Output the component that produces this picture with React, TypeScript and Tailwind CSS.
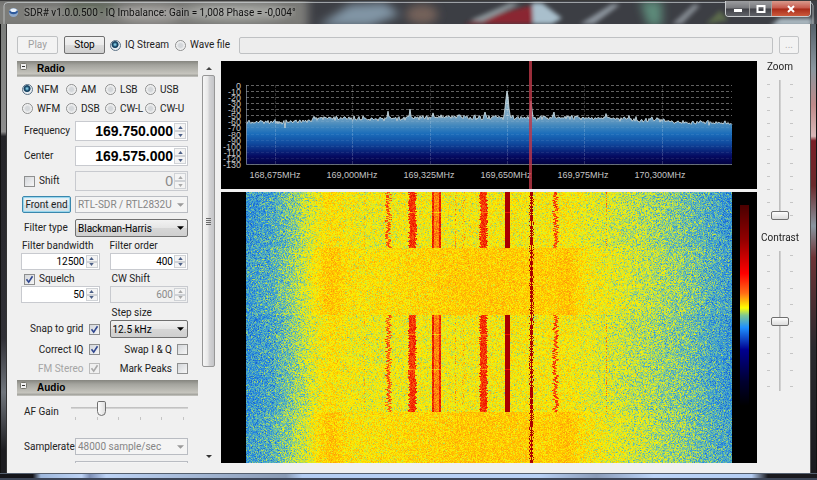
import { useEffect, useRef, useState } from 'react';
import type { ReactNode } from 'react';
import clsx from 'clsx';

const MODES = ['NFM', 'AM', 'LSB', 'USB', 'WFM', 'DSB', 'CW-L', 'CW-U'];

// waterfall palette, from weak to strong signal: [level, r, g, b]
const PALETTE = [
	[0, 0, 0, 145],
	[1, 34, 130, 225],
	[1.4, 95, 185, 180],
	[1.7, 190, 225, 75],
	[1.95, 250, 242, 5],
	[2.2, 255, 205, 0],
	[3, 254, 120, 16],
	[4, 240, 20, 0],
	[5, 170, 0, 0],
	[6, 80, 0, 0],
];

// noise floor across the band: [x, level]
const FLOOR = [
	[0, 1.16],
	[25, 1.28],
	[45, 1.54],
	[65, 1.84],
	[85, 2.02],
	[120, 1.95],
	[200, 1.98],
	[300, 2.02],
	[345, 1.9],
	[400, 1.68],
	[440, 1.5],
	[486, 1.15],
];

// bursts: [centre, half width, level, jitter]
const BURSTS = [
	[118, 0, 2.4, 0],
	[142, 1, 3.3, 2],
	[166, 3, 3.7, 1],
	[190, 4, 2.9, 0],
	[209, 0, 2.8, 0],
	[217, 0, 2.7, 1],
	[237, 3, 3.7, 1],
	[309, 1, 3.5, 2],
	[360, 0, 2.9, 0],
];

const WATERFALL_WIDTH = 486;
const WATERFALL_HEIGHT = 271;

function createRandom(seed: number) {
	let s = seed;
	return () => {
		s = (s * 1664525 + 1013904223) >>> 0;
		return s / 4294967296;
	};
}

function interpolate(points: number[][], x: number, column = 1) {
	if (x <= points[0][0]) return points[0][column];
	for (let i = 1; i < points.length; i++) {
		if (x <= points[i][0]) {
			const from = points[i - 1];
			const to = points[i];
			return from[column] + ((x - from[0]) / (to[0] - from[0])) * (to[column] - from[column]);
		}
	}
	return points[points.length - 1][column];
}

function Waterfall() {
	const ref = useRef<HTMLCanvasElement>(null);

	useEffect(() => {
		const ctx = ref.current?.getContext('2d');
		if (!ctx) return;
		const random = createRandom(41);
		const image = ctx.createImageData(WATERFALL_WIDTH, WATERFALL_HEIGHT);

		for (let y = 0; y < WATERFALL_HEIGHT; y++) {
			const active = y < 56 || (y >= 123 && y < 220);
			const fade = y === 20 || y === 142 || y === 177;
			const row = Array.from({ length: WATERFALL_WIDTH }, (_, x) => {
				let level = interpolate(FLOOR, x);
				const center = Math.exp(-(((x - 235) / 95) ** 2));
				level += active ? -0.03 : 0.03 + 0.22 * center;
				level += (active ? 0.1 : 0.22) * Math.exp(-(((x - 83) / 14) ** 2));
				level += (active ? 0.06 : 0.22) * Math.exp(-(((x - 321) / 12) ** 2));
				const noise = (random() + random() + random() - 1.5) * 0.5;
				return level + noise * 0.8;
			});
			if (active) {
				BURSTS.forEach(([x, half, level, jitter]) => {
					const shift = Math.round((random() - 0.5) * 2 * jitter);
					for (let d = -half; d <= half; d++) {
						if (half === 0 && random() < 0.55) continue;
						const edge = half === 4 && Math.abs(d) > 2 ? 1 : 0;
						row[x + d + shift] = level + edge + (random() - 0.5) * 0.9 - (fade ? 0.9 : 0);
					}
				});
				for (let x = 259; x <= 263; x++) row[x] = fade ? 4 : 5;
			}
			const wobble = Math.round((random() - 0.5) * 1.6);
			for (let x = 284; x <= 286; x++) row[x + (x === 285 ? 0 : wobble)] = 4.7 + random() * 0.5;

			row.forEach((value, x) => {
				const [r, g, b] = [1, 2, 3].map((column) => interpolate(PALETTE, value, column));
				image.data.set([r, g, b, 255], (y * WATERFALL_WIDTH + x) * 4);
			});
		}
		ctx.putImageData(image, 0, 0);
	}, []);

	return (
		<canvas
			ref={ref}
			width={WATERFALL_WIDTH}
			height={WATERFALL_HEIGHT}
			className="h-full min-w-0 flex-1"
		/>
	);
}

function buildTrace() {
	const random = createRandom(7);
	const floor = [
		[0, 61],
		[45, 61],
		[78, 57],
		[130, 58],
		[200, 56],
		[300, 57],
		[350, 57],
		[410, 59],
		[440, 62],
		[486, 62],
	];
	const peaks = [
		[118, 3, 1],
		[142, 6, 1],
		[164, 7, 1],
		[187, 4, 1],
		[239, 5, 1],
		[261, 26, 2],
		[285, 18, 1],
		[308, 6, 1],
		[360, 3, 1],
		[383, 3, 1],
		[406, 4, 1],
	];
	const points: string[] = [];
	for (let x = 0; x <= 486; x++) {
		let y = interpolate(floor, x) + (random() + random() - 1) * 3;
		peaks.forEach(([px, height, w]) => {
			y -= height * Math.exp(-(((x - px) / w) ** 2));
		});
		if (x === 39) y += 4;
		points.push(`${x + 25},${y.toFixed(1)}`);
	}
	return points.join(' ');
}

const TRACE = buildTrace();

function Spectrum() {
	const frequencies = ['168,675', '169,000', '169,325', '169,650', '169,975', '170,300'];

	return (
		<svg viewBox="0 0 536 128" className="block w-full shrink-0 bg-black font-['Liberation_Sans',sans-serif]">
			<defs>
				<linearGradient id="fill" gradientUnits="userSpaceOnUse" x1="0" y1="24" x2="0" y2="103">
					<stop offset="0" stopColor="#b9cccf" />
					<stop offset="0.42" stopColor="#6f9fc0" />
					<stop offset="0.52" stopColor="#3f86bd" />
					<stop offset="0.62" stopColor="#1a6cba" />
					<stop offset="0.75" stopColor="#0f469b" />
					<stop offset="0.9" stopColor="#050b62" />
					<stop offset="1" stopColor="#020140" />
				</linearGradient>
			</defs>
			<polygon points={`25,103 ${TRACE} 511,103`} fill="url(#fill)" />
			{Array.from({ length: 14 }, (_, i) => (
				<g key={i}>
					<line
						x1="25"
						x2="511"
						y1={24.5 + Math.round(i * 6.07)}
						y2={24.5 + Math.round(i * 6.07)}
						stroke="#fff"
						strokeOpacity={i < 6 ? 0.38 : 0.08}
						strokeDasharray="3 2"
					/>
					<text x="20" y={28 + Math.round(i * 6.07)} fontSize="9" textAnchor="end" fill="#c4c4c4">
						{i === 0 ? '0' : -i * 10}
					</text>
				</g>
			))}
			{frequencies.map((frequency, i) => (
				<g key={frequency}>
					<line
						x1={54.5 + Math.round(i * 77.3)}
						x2={54.5 + Math.round(i * 77.3)}
						y1="24"
						y2="103"
						stroke="#fff"
						strokeOpacity="0.18"
						strokeDasharray="3 1"
					/>
					<text x={54 + i * 77} y="117" fontSize="9" textAnchor="middle" fill="#c4c4c4">
						{frequency}MHz
					</text>
				</g>
			))}
			<polyline points={TRACE} fill="none" stroke="#c5d6dc" strokeWidth="0.9" />
			<path d="M25.500 24V103.500H511" fill="none" stroke="#8d98a8" strokeOpacity="0.7" />
			<rect x="308" y="0" width="3" height="128" fill="#c03848" fillOpacity="0.8" />
		</svg>
	);
}

function RadioButton({
	name,
	label,
	checked,
	onChange,
}: {
	name: string;
	label: string;
	checked: boolean;
	onChange: () => void;
}) {
	return (
		<label className="flex items-center gap-1 whitespace-nowrap">
			<input
				type="radio"
				name={name}
				checked={checked}
				onChange={onChange}
				className="h-[11px] w-[11px] shrink-0 appearance-none rounded-full border border-[#8e8f8f] bg-[radial-gradient(circle,#d4d7da_30%,#f8f8f8_70%)] checked:border-[#5c7286] checked:bg-[radial-gradient(circle_at_45%_40%,#7cc4e0_8%,#14405f_32%,#1d4a6b_42%,#e8eef2_54%)]"
			/>
			{label}
		</label>
	);
}

function CheckBox({
	label,
	defaultChecked,
	disabled,
	reverse,
}: {
	label: string;
	defaultChecked?: boolean;
	disabled?: boolean;
	reverse?: boolean;
}) {
	return (
		<label
			className={clsx(
				'flex items-center whitespace-nowrap',
				reverse ? 'flex-row-reverse justify-start gap-[5px]' : 'gap-1',
				disabled && 'text-[#a5a5a5]',
			)}
		>
			<span className="grid shrink-0">
				<input
					type="checkbox"
					defaultChecked={defaultChecked}
					disabled={disabled}
					className="peer h-[11px] w-[11px] appearance-none border border-[#8e8f8f] bg-[linear-gradient(135deg,#d3d6da,#f6f6f6)] [grid-area:1/1] disabled:border-[#bcbcbc] disabled:bg-none"
				/>
				<svg
					viewBox="0 0 11 11"
					className="pointer-events-none invisible h-[11px] w-[11px] text-[#31478f] [grid-area:1/1] peer-checked:visible peer-disabled:text-[#a8a8a8]"
				>
					<path d="M2.500 5.200L4.700 8.200L8.500 2.200" fill="none" stroke="currentColor" strokeWidth="1.600" />
				</svg>
			</span>
			{label}
		</label>
	);
}

function SpinBox({
	id,
	value,
	large,
	disabled,
}: {
	id: string;
	value: string;
	large?: boolean;
	disabled?: boolean;
}) {
	return (
		<div
			className={clsx(
				'flex w-full min-w-0 border border-[#c8cacf] pr-px',
				large ? 'h-5' : 'h-[17px]',
				disabled ? 'bg-[#f0f0f0]' : 'bg-white',
			)}
		>
			<input
				id={id}
				type="text"
				defaultValue={value}
				disabled={disabled}
				className={clsx(
					'w-0 min-w-0 flex-1 bg-transparent pr-px text-right outline-none',
					large && "font-['Liberation_Sans',sans-serif] text-[14px]",
					large && !disabled && 'font-bold',
					disabled ? 'text-[#8a8a8a]' : 'text-black',
				)}
			/>
			<div className={clsx('my-px flex w-[12px] shrink-0 flex-col', disabled ? 'text-[#a9a9a9]' : 'text-[#4b5f87]')}>
				{['Up', 'Down'].map((direction) => (
					<button
						key={direction}
						type="button"
						disabled={disabled}
						aria-label={direction}
						className="flex min-h-0 flex-1 items-center justify-center border border-[#cfd2d6] bg-[#f4f4f4]"
					>
						<svg viewBox="0 0 6 4" className="h-[3px] w-[5px]">
							<path d={direction === 'Up' ? 'M3 0L6 4H0Z' : 'M0 0H6L3 4Z'} fill="currentColor" />
						</svg>
					</button>
				))}
			</div>
		</div>
	);
}

function DropDown({
	id,
	value,
	flat,
	disabled,
}: {
	id: string;
	value: string;
	flat?: boolean;
	disabled?: boolean;
}) {
	return (
		<div className="grid w-full min-w-0 items-center">
			<select
				id={id}
				defaultValue={value}
				disabled={disabled}
				className={clsx(
					'w-full min-w-0 appearance-none border pl-[2px] pr-3 leading-[15px] [grid-area:1/1]',
					flat
						? 'h-[17px] border-[#b9bcc2] bg-[#f4f4f4] text-[#858585]'
						: 'h-[18px] rounded-[2px] border-[#707070] bg-[linear-gradient(#f2f2f2,#e6e6e6_48%,#d6d6d6_52%,#cfcfcf)] text-black',
				)}
			>
				<option>{value}</option>
			</select>
			<svg
				viewBox="0 0 8 4"
				className={clsx(
					'pointer-events-none mr-1 h-[4px] w-[7px] justify-self-end [grid-area:1/1]',
					flat ? 'text-[#9a9a9a]' : 'text-black',
				)}
			>
				<path d="M0 0H8L4 4Z" fill="currentColor" />
			</svg>
		</div>
	);
}

function GroupHeader({ title }: { title: string }) {
	return (
		<button
			type="button"
			className="flex h-4 w-full shrink-0 items-center gap-[10px] bg-[linear-gradient(#85857f,#a3a39d_25%,#c6c5be_80%,#a4a49e_90%,#c8c8c4)] pl-[3px] font-['Liberation_Sans',sans-serif] font-bold text-black"
		>
			<svg viewBox="0 0 7 7" className="mb-[5px] h-[7px] w-[7px]">
				<rect x="0.5" y="0.5" width="6" height="6" rx="1" fill="#f1f1f1" stroke="#77776f" />
				<path d="M2 3.500H5" stroke="#333" />
			</svg>
			{title}
		</button>
	);
}

function Row({ label, htmlFor, children }: { label: string; htmlFor: string; children: ReactNode }) {
	return (
		<div className="flex items-center pl-[7px] pr-[10px]">
			<label htmlFor={htmlFor} className="w-[51px] shrink-0 whitespace-nowrap">
				{label}
			</label>
			{children}
		</div>
	);
}

function SidePanel() {
	const [mode, setMode] = useState('NFM');

	return (
		<div className="flex w-[181px] shrink-0 flex-col overflow-hidden">
			<GroupHeader title="Radio" />
			<div className="mt-[3px] grid auto-rows-[19px] grid-cols-[44px_39px_40px_40px] pl-[5px]">
				{MODES.map((m) => (
					<RadioButton key={m} name="mode" label={m} checked={mode === m} onChange={() => setMode(m)} />
				))}
			</div>
			<div className="mt-[3px] flex flex-col gap-[5px]">
				<Row label="Frequency" htmlFor="frequency">
					<SpinBox id="frequency" value="169.750.000" large />
				</Row>
				<Row label="Center" htmlFor="center">
					<SpinBox id="center" value="169.575.000" large />
				</Row>
				<div className="flex items-center pl-[7px] pr-[10px]">
					<div className="w-[51px] shrink-0">
						<CheckBox label="Shift" />
					</div>
					<SpinBox id="shift" value="0" large disabled />
				</div>
				<div className="flex items-center gap-1 pl-[5px] pr-[10px]">
					<button
						type="button"
						className="h-[17px] w-[49px] shrink-0 whitespace-nowrap rounded-[2px] border border-[#3a87ad] bg-[linear-gradient(#f0f4f6,#e6ecef_50%,#d3dde2_52%,#dce4e8)] leading-[14px] shadow-[inset_0_0_1px_1px_#8fd4ee]"
					>
						Front end
					</button>
					<DropDown id="device" value="RTL-SDR / RTL2832U" flat disabled />
				</div>
			</div>
			<div className="mt-[6px]">
				<Row label="Filter type" htmlFor="filter-type">
					<DropDown id="filter-type" value="Blackman-Harris" />
				</Row>
			</div>
			<div className="mt-[2px] grid grid-cols-2 gap-x-[10px] pl-1 pr-[10px] leading-[14px]">
				<label htmlFor="bandwidth" className="whitespace-nowrap pl-px">
					Filter bandwidth
				</label>
				<label htmlFor="order">Filter order</label>
				<SpinBox id="bandwidth" value="12500" />
				<SpinBox id="order" value="400" />
			</div>
			<div className="mt-[2px] grid grid-cols-2 gap-x-[10px] pl-1 pr-[10px] leading-[14px]">
				<div className="pl-[3px]">
					<CheckBox label="Squelch" defaultChecked />
				</div>
				<label htmlFor="cw-shift" className="pl-[2px]">
					CW Shift
				</label>
				<SpinBox id="squelch" value="50" />
				<SpinBox id="cw-shift" value="600" disabled />
			</div>
			<div className="mt-[3px] grid grid-cols-2 gap-x-[10px] pl-1 pr-[10px]">
				<label htmlFor="step" className="col-start-2 pl-[2px] leading-[14px]">
					Step size
				</label>
				<CheckBox label="Snap to grid" defaultChecked reverse />
				<DropDown id="step" value="12.5 kHz" />
			</div>
			<div className="mt-[2px] grid auto-rows-[19px] grid-cols-2 gap-x-[10px] pl-1 pr-[10px]">
				<CheckBox label="Correct IQ" defaultChecked reverse />
				<CheckBox label="Swap I & Q" reverse />
				<CheckBox label="FM Stereo" defaultChecked disabled reverse />
				<CheckBox label="Mark Peaks" reverse />
			</div>
			<div className="mt-[2px]">
				<GroupHeader title="Audio" />
			</div>
			<div className="mt-1 flex items-center gap-1 pl-[7px] pr-[10px]">
				<label htmlFor="gain" className="w-[43px] shrink-0 whitespace-nowrap">
					AF Gain
				</label>
				<div className="flex min-w-0 flex-1 flex-col gap-px pb-1">
					<input
						id="gain"
						type="range"
						defaultValue="24"
						className="h-[16px] w-full appearance-none bg-[linear-gradient(#b9b9b9,#dcdcdc)] bg-[length:100%_2px] bg-center bg-no-repeat [&::-webkit-slider-thumb]:h-[15px] [&::-webkit-slider-thumb]:w-[9px] [&::-webkit-slider-thumb]:appearance-none [&::-webkit-slider-thumb]:rounded-b-[5px] [&::-webkit-slider-thumb]:rounded-t-[2px] [&::-webkit-slider-thumb]:border [&::-webkit-slider-thumb]:border-[#6f6f6f] [&::-webkit-slider-thumb]:bg-[linear-gradient(90deg,#fdfdfd,#dedede)]"
					/>
					<div className="flex justify-between px-1">
						{[0, 1, 2, 3, 4, 5].map((tick) => (
							<span key={tick} className="h-[3px] w-px bg-[#c4c4c4]" />
						))}
					</div>
				</div>
			</div>
			<div className="mt-[14px] flex flex-col gap-[6px]">
				<Row label="Samplerate" htmlFor="samplerate">
					<DropDown id="samplerate" value="48000 sample/sec" flat disabled />
				</Row>
				<div className="ml-[58px] mr-[10px] h-[17px] border border-[#b9bcc2] bg-[#f4f4f4]" />
			</div>
		</div>
	);
}

function ScrollBar() {
	return (
		<div className="ml-1 flex w-[13px] shrink-0 flex-col items-center bg-[#f0f0f0]">
			<button type="button" aria-label="Scroll up" className="flex h-[14px] w-full items-center justify-center">
				<svg viewBox="0 0 6 3" className="h-[3px] w-[6px]">
					<path d="M3 0L6 3H0Z" fill="#444" />
				</svg>
			</button>
			<div className="flex w-full flex-1 flex-col">
				<div className="flex flex-[78] flex-col items-center justify-center gap-px rounded-[2px] border border-[#979797] bg-[linear-gradient(90deg,#f6f6f6,#e8e8e8_45%,#d4d4d6_55%,#c4c5c8)]">
					{[0, 1, 2, 3].map((line) => (
						<span key={line} className="h-px w-[5px] bg-[#6a6a6a]" />
					))}
				</div>
				<div className="flex-[22]" />
			</div>
			<button type="button" aria-label="Scroll down" className="flex h-[14px] w-full items-center justify-center">
				<svg viewBox="0 0 6 3" className="h-[3px] w-[6px]">
					<path d="M0 0H6L3 3Z" fill="#333" />
				</svg>
			</button>
		</div>
	);
}

function VerticalSlider({
	id,
	label,
	value,
	ticks,
}: {
	id: string;
	label: string;
	value: string;
	ticks: number;
}) {
	const marks = Array.from({ length: ticks }, (_, i) => (
		<span key={i} className="h-px w-[3px] bg-[#c6c6c6]" />
	));

	return (
		<div className="flex flex-col items-center">
			<label htmlFor={id} className="h-[19px] leading-[11px]">
				{label}
			</label>
			<div className="flex gap-px">
				<div className="flex flex-col justify-between py-1">{marks}</div>
				<input
					id={id}
					type="range"
					defaultValue={value}
					className="h-[140px] w-[18px] appearance-none bg-[linear-gradient(90deg,#b5b5b5,#dadada)] bg-[length:2px_100%] bg-center bg-no-repeat [direction:rtl] [writing-mode:vertical-lr] [&::-webkit-slider-thumb]:h-[9px] [&::-webkit-slider-thumb]:w-[18px] [&::-webkit-slider-thumb]:appearance-none [&::-webkit-slider-thumb]:rounded-[2px] [&::-webkit-slider-thumb]:border [&::-webkit-slider-thumb]:border-[#6f6f6f] [&::-webkit-slider-thumb]:bg-[linear-gradient(#fdfdfd,#dcdcdc)]"
				/>
				<div className="flex flex-col justify-between py-1">{marks}</div>
			</div>
		</div>
	);
}

function TitleBar() {
	return (
		<header className="grid h-6 shrink-0 overflow-hidden border-t border-[#3a3a3a]">
			<svg viewBox="0 0 817 24" preserveAspectRatio="none" className="h-full w-full [grid-area:1/1]">
				<defs>
					<filter id="soft" x="-10%" y="-50%" width="120%" height="200%">
						<feGaussianBlur stdDeviation="5" />
					</filter>
					<filter id="softer" x="-10%" y="-50%" width="120%" height="200%">
						<feGaussianBlur stdDeviation="2" />
					</filter>
				</defs>
				<rect width="817" height="24" fill="#3c3e44" />
				<g filter="url(#soft)">
					<rect x="-10" y="-4" width="318" height="34" fill="#7d7d79" />
					<ellipse cx="90" cy="8" rx="28" ry="8" fill="#626a5c" />
					<ellipse cx="150" cy="14" rx="30" ry="10" fill="#9a9794" />
					<ellipse cx="235" cy="12" rx="50" ry="9" fill="#9fa09c" />
					<path d="M318 26L350 4L385 2L400 14L370 26Z" fill="#8195a5" />
					<ellipse cx="422" cy="14" rx="16" ry="10" fill="#75625a" />
					<path d="M640 0H662V26H648Z" fill="#5d8b7a" />
				</g>
				<g filter="url(#softer)">
					<path d="M464 24L510 10L535 4L532 24Z" fill="#8a2730" />
					<path d="M470 20L510 2L520 3L482 22Z" fill="#8b9499" />
					<path d="M532 2L542 2L562 18L552 24H533Z" fill="#a9bfcc" />
					<path d="M580 24L612 3L620 4L594 24Z" fill="#8c949d" />
					<path d="M672 24L694 3L700 5L682 24Z" fill="#82888f" />
					<path d="M706 24L720 10L728 20Z" fill="#5b6b4c" />
					<path d="M770 26L780 18H812V26Z" fill="#aebcc4" />
				</g>
				<path d="M4 24V5Q4 1.500 8 1.500H809Q813 1.500 813 5V24" fill="none" stroke="#d6dadd" strokeOpacity="0.7" />
			</svg>
			<div className="z-10 flex min-w-0 items-start [grid-area:1/1]">
				<div className="flex h-[23px] min-w-0 flex-1 items-center gap-[5px] pl-2">
					<svg viewBox="0 0 12 12" className="h-[11px] w-[11px] shrink-0">
						<circle cx="6" cy="6" r="5" fill="#8fa8c8" />
						<path d="M1 5Q6 1 11 5Q10 8 6 8Q2 8 1 5Z" fill="#2e5a9c" />
						<ellipse cx="6" cy="3.500" rx="3.500" ry="2" fill="#eaf2fa" />
					</svg>
					<h1 className="truncate text-[10px] text-[#111] [text-shadow:0_0_6px_#d0d0d0]">
						SDR# v1.0.0.500 - IQ Imbalance: Gain = 1,008 Phase = -0,004°
					</h1>
				</div>
				<div className="mr-[6px] flex h-4 shrink-0 overflow-hidden rounded-b-[4px] border border-t-0 border-[#c9ccce]">
					<button
						type="button"
						aria-label="Minimize"
						className="flex w-6 items-center justify-center border-r border-[#a0a0a0] bg-[linear-gradient(#9c9da0,#77787c_48%,#3f4046_52%,#606268)]"
					>
						<svg viewBox="0 0 10 8" className="h-2 w-[10px]">
							<rect x="1" y="4" width="8" height="3" fill="#fff" />
						</svg>
					</button>
					<button
						type="button"
						aria-label="Maximize"
						className="flex w-[22px] items-center justify-center border-r border-[#a0a0a0] bg-[linear-gradient(#9c9da0,#77787c_48%,#3f4046_52%,#606268)]"
					>
						<svg viewBox="0 0 10 8" className="h-2 w-[10px]">
							<rect x="1.5" y="1" width="7" height="6" fill="none" stroke="#fff" strokeWidth="2" />
						</svg>
					</button>
					<button
						type="button"
						aria-label="Close"
						className="flex w-[38px] items-center justify-center bg-[linear-gradient(#d99a8c,#c6584a_48%,#a82a18_52%,#cc5a3c)]"
					>
						<svg viewBox="0 0 10 8" className="h-2 w-[10px]">
							<path d="M2 1L8 7M8 1L2 7" stroke="#fff" strokeWidth="2" />
						</svg>
					</button>
				</div>
			</div>
		</header>
	);
}

function Toolbar() {
	const [source, setSource] = useState('IQ Stream');

	return (
		<div className="flex h-[18px] shrink-0 items-center">
			<button
				type="button"
				disabled
				className="h-[18px] w-[41px] rounded-[2px] border border-[#bfc1c3] bg-[#f3f3f3] text-[#a0a0a0]"
			>
				Play
			</button>
			<button
				type="button"
				className="ml-[6px] h-[18px] w-[41px] rounded-[2px] border border-[#707070] bg-[linear-gradient(#f2f2f2,#ebebeb_48%,#dcdcdc_52%,#cfcfcf)] text-black"
			>
				Stop
			</button>
			<div className="ml-[5px] flex w-[123px] gap-[6px]">
				<RadioButton
					name="source"
					label="IQ Stream"
					checked={source === 'IQ Stream'}
					onChange={() => setSource('IQ Stream')}
				/>
				<RadioButton
					name="source"
					label="Wave file"
					checked={source === 'Wave file'}
					onChange={() => setSource('Wave file')}
				/>
			</div>
			<input
				type="text"
				disabled
				aria-label="Wave file path"
				className="ml-[6px] mt-px h-[17px] min-w-0 flex-1 rounded-[2px] border border-[#bfc1c3] bg-[#ededed]"
			/>
			<button
				type="button"
				disabled
				className="ml-[6px] mr-[1px] h-[18px] w-5 rounded-[2px] border border-[#c3c5c7] bg-[#f3f3f3] text-[#b0b0b0]"
			>
				...
			</button>
		</div>
	);
}

export default function App() {
	return (
		<div className="flex h-screen flex-col overflow-hidden bg-[#222] font-[Roboto,'Liberation_Sans',sans-serif] text-[10px] leading-[14px] text-[#222]">
			<TitleBar />
			<div className="flex min-h-0 flex-1">
				<div className="w-[7px] shrink-0 border-r border-[#333] bg-[linear-gradient(#7b7d7b,#8d8d8d_24%,#242428_25%,#303036_70%,#70757c_82%,#1c1c20_95%)] shadow-[inset_1px_0_#111]" />
				<main className="flex min-w-0 flex-1 flex-col gap-[7px] bg-[#f0f0f0] pb-[10px] pl-[10px] pt-3">
					<div className="pr-[10px]">
						<Toolbar />
					</div>
					<div className="flex min-h-0 flex-1">
						<SidePanel />
						<ScrollBar />
						<div className="ml-[6px] flex min-w-0 flex-1 flex-col gap-[3px]">
							<Spectrum />
							<div className="flex min-h-0 flex-1 bg-black pl-[25px]">
								<Waterfall />
								<div className="flex w-[25px] shrink-0 justify-center py-[13px]">
									<div className="w-[9px] bg-[linear-gradient(#4a0000,#900000_14%,#ff0000_28%,#fe6d16_36%,#ffff00_42%,#7fc890_45%,#1e90ff_50%,#000091_59%,#000030_72%,#000_82%)]" />
								</div>
							</div>
						</div>
						<div className="mr-[7px] flex w-[46px] shrink-0 flex-col gap-[12px]">
							<VerticalSlider id="zoom" label="Zoom" value="0" ticks={11} />
							<VerticalSlider id="contrast" label="Contrast" value="50" ticks={9} />
						</div>
					</div>
				</main>
				<div className="w-[7px] shrink-0 border-l border-[#555] bg-[linear-gradient(#56606a,#8b979f_10%,#c08a8a_18%,#d9b8b8_25%,#7b2028_26%,#6b2a2c_36%,#8a96a0_45%,#6e3436_52%,#2a2a2e_72%,#1a1a1e)] shadow-[inset_-1px_0_#111]" />
			</div>
			<div className="h-[7px] shrink-0 border-b-2 border-t border-b-[#3d4658] border-t-[#55606f] bg-[linear-gradient(90deg,#15151a_4%,#9fb8dc_5%,#bdd3f5_10%,#7d8fb5_11%,#bdd3f5_13%,#8a9bb4_35%,#b4cdf2_37%,#b9d1f5_66%,#8b9cb8_73%,#bcd4f7_80%,#b4cdf2_92%,#1a1a1e_94%)]" />
		</div>
	);
}
